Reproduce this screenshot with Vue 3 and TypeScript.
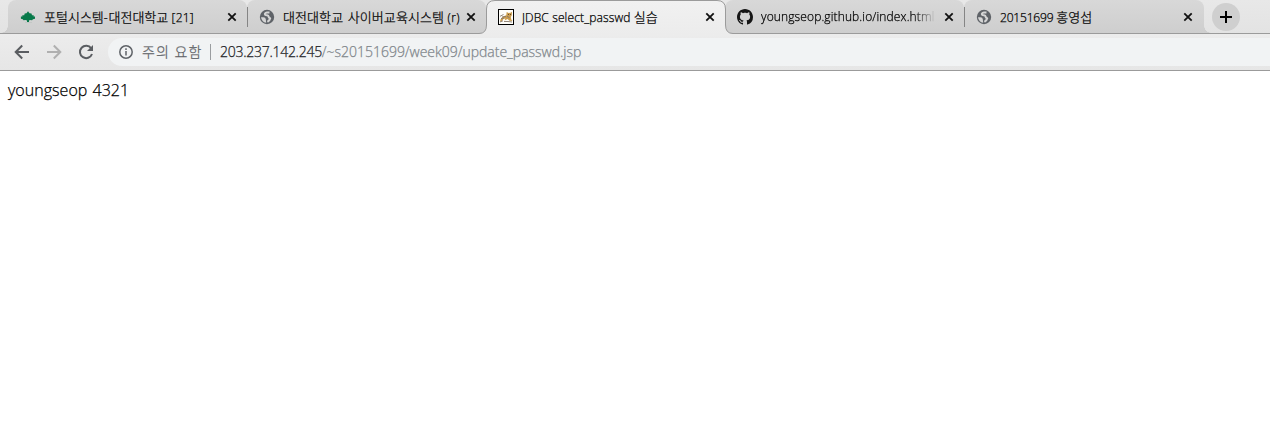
<script setup lang="ts">
interface Run { t: string; ko?: boolean; ls: number }
interface Tab { icon: 'tree' | 'globe' | 'cat' | 'github'; runs: Run[]; active?: boolean; sep?: boolean; fade?: boolean }

const tabs: Tab[] = [
  { icon: 'tree', sep: true, runs: [{ t: '포털시스템', ko: true, ls: 0 }, { t: '-', ls: 0.8 }, { t: '대전대학교', ko: true, ls: 0 }, { t: ' [21]', ls: 0.2 }] },
  { icon: 'globe', runs: [{ t: '대전대학교', ko: true, ls: 0.08 }, { t: ' ', ls: 1.4 }, { t: '사이버교육시스템', ko: true, ls: 0.08 }, { t: ' (r)', ls: 0.4 }] },
  { icon: 'cat', active: true, runs: [{ t: 'JDBC select_passwd ', ls: 0.13 }, { t: '실습', ko: true, ls: 0 }] },
  { icon: 'github', sep: true, fade: true, runs: [{ t: 'youngseop.github.io/index.html', ls: 0.12 }] },
  { icon: 'globe', runs: [{ t: '20151699 ', ls: -0.18 }, { t: '홍영섭', ko: true, ls: 0 }] },
]
</script>

<template>
  <div class="window">
    <header class="strip">
      <div v-for="(tab, i) in tabs" :key="i" class="tab" :class="{ active: tab.active, first: i === 0, last: i === tabs.length - 1 }">
        <svg v-if="tab.active" class="shape" width="258" height="35" viewBox="0 0 258 35">
          <defs>
            <linearGradient id="activeFill" x1="0" y1="0" x2="0" y2="1">
              <stop offset="0" stop-color="#f1f1f1" /><stop offset="1" stop-color="#ececec" />
            </linearGradient>
          </defs>
          <path d="M0 35V33.500H2Q9.500 33.500 9.500 25V9Q9.500 .5 18 .5H240Q248.500 .5 248.500 9V25Q248.500 33.500 256 33.500H258V35Z" fill="url(#activeFill)" />
          <path d="M0 33.500H2Q9.500 33.500 9.500 25V9Q9.500 .5 18 .5H240Q248.500 .5 248.500 9V25Q248.500 33.500 256 33.500H258" fill="none" stroke="#9b9b9b" />
        </svg>
        <svg v-if="tab.icon === 'tree'" class="icon" width="16" height="16" viewBox="0 0 16 16">
          <path d="M8 2.300 9.500 4.200 11.500 4.500 12 6.200 13.700 6.200 13.600 7.400 15 7.500V9.700L13 10.200 12 11.300 10 11 9 11.500V13H7V11.500L5.500 11 3.500 11.300 2.800 10.200 .9 9.700V7.500L2.400 7.400 2.300 6.200 4.200 6.200 4.700 4.500 6.500 4.200Z" fill="#08794a" />
          <path d="M5 13.500h7" stroke="#c3c8c5" />
        </svg>
        <svg v-else-if="tab.icon === 'globe'" class="icon" width="16" height="16" viewBox="0 0 16 16">
          <circle cx="8" cy="8" r="7.200" fill="#5f6368" />
          <path d="M10.500 3.600 8 3.500Q5.600 4 5.900 5.500 6 6.400 8 6.300 9.600 6.500 9.700 8 10 9.200 11.200 9.200 10.800 11.400 8.400 12.800" fill="none" stroke="#d5d5d5" stroke-width="2" stroke-linejoin="round" />
          <path d="M2 8.300H4.400Q6.700 8.500 6.800 10.300L7.200 13.800Q2.700 13.100 2 8.300Z" fill="#d5d5d5" />
        </svg>
        <svg v-else-if="tab.icon === 'cat'" class="icon" width="16" height="16" viewBox="0 0 16 16">
          <rect x=".5" y=".5" width="15" height="15" fill="#fffefa" stroke="#000" />
          <path d="M2.500 10.500 5 7.500 8.300 6.200 8.700 3 10.500 4 12.500 3.800 14 2.800 13.800 6.200 12.800 8 13.300 10.500 14.500 12 11.500 11.800 9.500 10 6.500 11.500 7.500 9.500 5.500 10 3.500 12.500 2 12.500Z" fill="#cb9c4c" />
          <path d="M2 7.300 5.500 5.500M2 13 5 11.800M9 7.300 11.500 8.700M6 12.500H10M10 12.500 14 13M4 8 8 7.500M3 9.500 6 9" stroke="#85776a" stroke-width=".9" />
          <path d="M10 5h1v1h-1zm2 0h1v1h-1z" fill="#684b25" />
        </svg>
        <svg v-else class="icon" width="16" height="16" viewBox="0 0 16 16">
          <path fill="#151515" fill-rule="evenodd" d="M8 0C3.580 0 0 3.580 0 8c0 3.540 2.290 6.530 5.470 7.590.4.070.55-.17.55-.38 0-.19-.01-.82-.01-1.490-2.010.37-2.530-.49-2.690-.94-.09-.23-.48-.94-.82-1.130-.28-.15-.68-.52-.01-.53.63-.01 1.080.58 1.230.82.72 1.210 1.870.87 2.330.66.07-.52.28-.87.51-1.070-1.780-.2-3.640-.89-3.640-3.950 0-.87.31-1.590.82-2.150-.08-.2-.36-1.020.08-2.120 0 0 .67-.21 2.200.82.640-.18 1.320-.27 2-.27s1.360.09 2 .27c1.530-1.040 2.200-.82 2.200-.82.44 1.100.16 1.920.08 2.120.51.56.82 1.270.82 2.150 0 3.070-1.870 3.750-3.650 3.950.29.25.54.73.54 1.480 0 1.070-.01 1.930-.01 2.200 0 .21.15.46.55.38A8.010 8.010 0 0 0 16 8c0-4.420-3.580-8-8-8z" />
        </svg>
        <span class="title" :class="{ fade: tab.fade }"><span v-for="(r, j) in tab.runs" :key="j" :class="{ ko: r.ko }" :style="{ letterSpacing: r.ls + 'px' }">{{ r.t }}</span></span>
        <svg class="close" width="10" height="10" viewBox="0 0 10 10"><path d="m1.300 1.300 7.400 7.400m0-7.400-7.400 7.400" stroke="#111" stroke-width="1.800" /></svg>
        <i v-if="tab.sep" class="sep"></i>
      </div>
      <button class="plus"><svg width="12" height="12" viewBox="0 0 12 12"><path d="M6 0v12M0 6h12" stroke="#000" stroke-width="2" /></svg></button>
    </header>
    <nav class="toolbar">
      <svg class="nav" width="16" height="16" viewBox="0 0 16 16"><path d="M15 8H2M8.200 1.500 1.700 8l6.500 6.500" fill="none" stroke="#5a5d61" stroke-width="2" /></svg>
      <svg class="nav" width="16" height="16" viewBox="0 0 16 16"><path d="M1 8h13M7.800 1.500 14.300 8l-6.500 6.500" fill="none" stroke="#b0b0b0" stroke-width="2" /></svg>
      <svg class="nav" width="16" height="16" viewBox="0 0 16 16"><path d="M13.200 4.300A6.200 6.200 0 1 0 14 10" fill="none" stroke="#5a5d61" stroke-width="2" /><path d="M15 1v6H9Z" fill="#5a5d61" /></svg>
      <div class="omnibox">
        <svg width="14" height="14" viewBox="0 0 14 14"><circle cx="7" cy="7" r="6.200" fill="none" stroke="#5f6368" stroke-width="1.500" /><path d="M7 6v4.500M7 3.300v1.600" stroke="#5f6368" stroke-width="1.500" /></svg>
        <span class="warn">주의 요함</span>
        <i class="divider"></i>
        <span class="host">203.237.142.245</span><span class="path">/~s20151699/week09/update_passwd.jsp</span>
      </div>
    </nav>
    <main>youngseop 4321</main>
  </div>
</template>

<style>
body { margin: 0; background: #fff; }
</style>

<style scoped>
.window { height: 422px; overflow: hidden; background: #fff; font-family: "Open Sans", "Noto Sans CJK KR", sans-serif; font-weight: 300; -webkit-text-stroke: .25px currentColor; }
.strip { box-sizing: border-box; height: 34px; display: flex; padding-left: 8px; background: linear-gradient(#e8e8e8, #e3e3e3); border-bottom: 1px solid #9b9b9b; }
.tab { position: relative; box-sizing: border-box; flex: none; width: 239px; height: 33px; padding: 0 10px 0 12px; display: flex; align-items: center; background: linear-gradient(#d8d8d8, #cecece); border-radius: 8px 8px 0 0; }
.tab.active { background: none; z-index: 1; }
.tab.last { width: 240px; padding-right: 11px; }
.tab.first::before, .tab.last::after { content: ""; position: absolute; bottom: 0; width: 7px; height: 7px; }
.tab.first::before { left: -7px; background: radial-gradient(circle at 0 0, transparent 6.500px, #cecece 7px); }
.tab.last::after { right: -7px; background: radial-gradient(circle at 100% 0, transparent 6.500px, #cecece 7px); }
.shape { position: absolute; left: -9px; top: 0; }
.icon { position: relative; flex: none; }
.title { position: relative; width: 178px; height: 18px; margin-left: 8px; overflow: hidden; white-space: pre; font-size: 12px; line-height: 18px; color: #000; }
.title .ko { font-family: "Noto Sans CJK KR", sans-serif; font-size: 13px; line-height: 18px; }
.title.fade { -webkit-mask-image: linear-gradient(90deg, #000 86%, transparent 98%); mask-image: linear-gradient(90deg, #000 86%, transparent 98%); }
.close { position: relative; flex: none; margin-left: 5px; }
.sep { position: absolute; z-index: 2; right: -1px; top: 7px; width: 1px; height: 20px; background: #858585; }
.plus { width: 28px; height: 28px; margin: 3px 0 0 8px; padding: 0; border: 0; border-radius: 50%; background: #cfcfcf; display: flex; align-items: center; justify-content: center; }
.toolbar { box-sizing: border-box; height: 37px; padding: 4px 0 4px 14px; display: flex; gap: 16px; align-items: center; background: linear-gradient(#ececec, #e6e6e6); border-bottom: 1px solid #9b9b9b; }
.nav { flex: none; }
.omnibox { box-sizing: border-box; flex: 1; height: 28px; margin-left: -2px; padding-left: 11px; display: flex; align-items: center; background: #f1f3f4; border-radius: 14px 0 0 14px; font-size: 14px; line-height: 20px; }
.warn { width: 60px; margin: -2px 0 0 9px; white-space: nowrap; font-family: "Noto Sans CJK KR", sans-serif; color: #5f6368; letter-spacing: 1.200px; }
.divider { width: 1px; height: 16px; margin: 0 9px 0 8px; background: #9a9da0; }
.host { color: #202124; letter-spacing: -.27px; }
.path { color: #80868b; letter-spacing: -.02px; }
main { padding: 8px; font-size: 16px; line-height: 22px; color: #000; letter-spacing: .03px; word-spacing: 1px; }
</style>
